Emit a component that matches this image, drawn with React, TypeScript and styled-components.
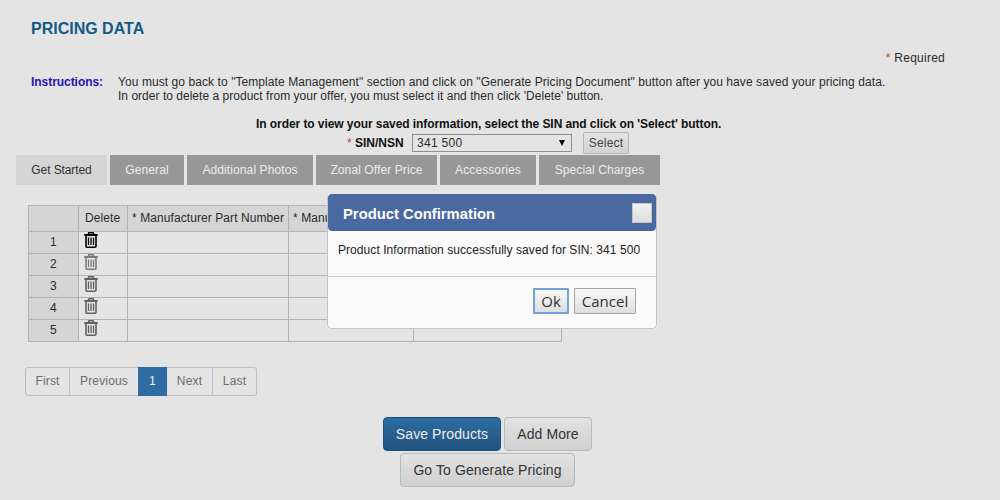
import React from 'react';
import styled, { createGlobalStyle } from 'styled-components';

const GlobalStyle = createGlobalStyle`
  * { box-sizing: border-box; }
  body {
    margin: 0;
    overflow: hidden;
    background: #e4e4e4;
    color: #2b2b2b;
    font: 12px/14px "Liberation Sans", Arial, sans-serif;
  }
  button { font-family: inherit; padding: 0; margin: 0; }
`;

const Page = styled.main`
  width: 1000px;
  height: 500px;
  overflow: hidden;
  background: #e4e4e4;
`;

const Title = styled.h1`
  margin: 0;
  padding: 19px 0 0 31px;
  height: 50px;
  font-size: 16px;
  line-height: 20px;
  font-weight: bold;
  color: #145a84;
`;

const Star = styled.span`
  color: #d03038;
  font-weight: normal;
`;

const Required = styled.div`
  padding-right: 55px;
  height: 25px;
  line-height: 16px;
  text-align: right;
  letter-spacing: 0.25px;
`;

const Instructions = styled.section`
  display: flex;
  padding-left: 31px;
  height: 42px;
`;

const InstructionsLabel = styled.strong`
  width: 87px;
  color: #1e14c0;
  letter-spacing: -0.05px;
`;

const InstructionsText = styled.p`
  margin: 0;
  white-space: nowrap;
`;

const Line = styled.span<{ $spacing?: number }>`
  display: block;
  letter-spacing: ${(p) => p.$spacing ?? 0}px;
`;

const SelectHint = styled.div`
  height: 15px;
  padding-left: 256px;
  font-weight: bold;
  color: #111;
  letter-spacing: -0.07px;
  white-space: nowrap;
`;

const SinRow = styled.div`
  display: flex;
  align-items: center;
  height: 22px;
  padding-left: 347px;
`;

const SinLabel = styled.label`
  width: 65px;
  font-weight: bold;
  color: #111;
  white-space: pre;
`;

const SinSelect = styled.div`
  display: flex;
  align-items: center;
  justify-content: space-between;
  width: 160px;
  height: 18px;
  margin-right: 11px;
  padding: 0 6px 0 4px;
  border: 1px solid #8e8e8e;
  letter-spacing: 0.3px;
`;

const SelectButton = styled.button`
  width: 46px;
  height: 22px;
  border: 1px solid #b4b4b4;
  border-radius: 2px;
  background: linear-gradient(#e4e4e4, #d2d2d2);
  color: #444;
  font-size: 12px;
  letter-spacing: 0.2px;
`;

const Tabs = styled.nav`
  display: flex;
  gap: 3px;
  height: 51px;
  padding: 1px 0 0 16px;
`;

const Tab = styled.button<{ $width: number; $active?: boolean }>`
  width: ${(p) => p.$width}px;
  height: 30px;
  border: 0;
  background: ${(p) => (p.$active ? '#d5d5d5' : '#979797')};
  color: ${(p) => (p.$active ? '#333' : '#ececec')};
  font-size: 12px;
  letter-spacing: ${(p) => (p.$active ? -0.1 : 0.1)}px;
  white-space: nowrap;
`;

const Grid = styled.div`
  display: grid;
  grid-template-columns: 50px 49px 161px 125px 148px;
  grid-template-rows: 26px repeat(5, 22px);
  width: 534px;
  height: 137px;
  margin-left: 28px;
  border-top: 1px solid #b2b2b2;
  border-left: 1px solid #b2b2b2;
`;

const Cell = styled.div<{ $head?: boolean; $center?: boolean; $pad?: number }>`
  display: flex;
  align-items: center;
  justify-content: ${(p) => (p.$center ? 'center' : 'flex-start')};
  padding-left: ${(p) => (p.$center ? 0 : p.$pad ?? 5)}px;
  padding-bottom: ${(p) => (p.$head ? 2 : 0)}px;
  overflow: hidden;
  border-right: 1px solid #b2b2b2;
  border-bottom: 1px solid #b2b2b2;
  background: ${(p) => (p.$head ? '#d5d5d5' : 'transparent')};
  letter-spacing: 0.08px;
  white-space: nowrap;
`;

const TrashIcon = styled.svg`
  display: block;
  flex: none;
  margin-bottom: 5px;
`;

const Pager = styled.nav`
  display: flex;
  width: 232px;
  height: 29px;
  margin: 25px 0 0 25px;
  border: 1px solid #bfbfbf;
  border-radius: 3px;
`;

const PageLink = styled.button<{ $width: number; $active?: boolean; $divided?: boolean }>`
  width: ${(p) => p.$width}px;
  height: ${(p) => (p.$active ? 29 : 27)}px;
  margin-top: ${(p) => (p.$active ? -1 : 0)}px;
  padding-bottom: 2px;
  border: 0;
  border-right: ${(p) => (p.$divided ? '1px solid #bfbfbf' : '0')};
  background: ${(p) => (p.$active ? '#2e6da4' : 'transparent')};
  color: ${(p) => (p.$active ? '#f0f0f0' : '#6d6d6d')};
  font-size: 12px;
  letter-spacing: 0.15px;
`;

const Actions = styled.div`
  display: flex;
  flex-direction: column;
  gap: 2px;
  margin: 21px 0 0 383px;
`;

const ActionRow = styled.div<{ $indent?: number }>`
  display: flex;
  gap: 3px;
  padding-left: ${(p) => p.$indent ?? 0}px;
`;

const ActionButton = styled.button<{ $width: number; $primary?: boolean }>`
  width: ${(p) => p.$width}px;
  height: 34px;
  border: 1px solid ${(p) => (p.$primary ? '#205081' : '#b9b9b9')};
  border-radius: 4px;
  background: ${(p) =>
    p.$primary ? 'linear-gradient(#2d6ca2, #22547f)' : 'linear-gradient(#e2e2e2, #d0d0d0)'};
  color: ${(p) => (p.$primary ? '#eee' : '#333')};
  font-size: 14px;
  letter-spacing: 0.1px;
  white-space: nowrap;
`;

const Dialog = styled.div`
  position: absolute;
  left: 327px;
  top: 194px;
  width: 330px;
  height: 135px;
  border: 1px solid #c4c4c4;
  border-radius: 5px;
  background: #fafafa;
`;

const DialogHeader = styled.header`
  display: flex;
  align-items: center;
  justify-content: space-between;
  height: 37px;
  margin: -1px 0 0;
  padding: 0 3px 0 14px;
  border: 1px solid #4765a0;
  border-radius: 4px;
  background: #4a69a0;
  color: #fff;
  font-size: 14.8px;
  font-weight: bold;
`;

const DialogTitle = styled.span`
  padding-top: 2px;
`;

const CloseButton = styled.button`
  width: 20px;
  height: 20px;
  border: 1px solid #c4c4c4;
  background: linear-gradient(#f2f2f2, #dedede);
`;

const DialogBody = styled.div`
  height: 46px;
  padding: 12px 0 0 10px;
  border-bottom: 1px solid #c8c8c8;
  color: #222;
  letter-spacing: 0.06px;
  white-space: nowrap;
`;

const DialogFooter = styled.footer`
  display: flex;
  justify-content: flex-end;
  gap: 5px;
  padding: 11px 20px 0 0;
`;

const DialogButton = styled.button<{ $width: number; $focused?: boolean }>`
  width: ${(p) => p.$width}px;
  height: 26px;
  border: ${(p) => (p.$focused ? '2px solid #73a0e4' : '1px solid #a3a3a3')};
  border-radius: 1px;
  background: linear-gradient(#f8f8f8, #dedede);
  color: #333;
  font: 15px/20px "Open Sans", sans-serif;
`;

const Trash = ({ color }: { color: string }) => (
  <TrashIcon width="14" height="16" viewBox="0 0 14 16" fill="none" stroke={color}>
    <path d="M4.5 2V1.4Q4.5.8 5.2.8H8.8Q9.5.8 9.5 1.4V2" strokeWidth="1.5" />
    <path d="M.3 3H13.7" strokeWidth="2" />
    <path d="M2 4V14.2Q2 15.2 3 15.2H11Q12 15.2 12 14.2V4" strokeWidth="1.6" />
    <path d="M4.5 5.5V13M7 5.5V13M9.5 5.5V13" strokeWidth="1.3" />
  </TrashIcon>
);

const tabs: [string, number][] = [
  ['Get Started', 91],
  ['General', 74],
  ['Additional Photos', 126],
  ['Zonal Offer Price', 121],
  ['Accessories', 96],
  ['Special Charges', 121],
];

const columns: [string, number][] = [
  ['', 0],
  ['Delete', 6],
  ['* Manufacturer Part Number', 4],
  ['* Manu', 4],
  ['', 0],
];

export default function App() {
  return (
    <Page>
      <GlobalStyle />
      <Title>PRICING DATA</Title>
      <Required><Star>*</Star> Required</Required>
      <Instructions>
        <InstructionsLabel>Instructions:</InstructionsLabel>
        <InstructionsText>
          <Line $spacing={0.075}>You must go back to "Template Management" section and click on "Generate Pricing Document" button after you have saved your pricing data.</Line>
          <Line $spacing={0.022}>In order to delete a product from your offer, you must select it and then click 'Delete' button.</Line>
        </InstructionsText>
      </Instructions>
      <SelectHint>In order to view your saved information, select the SIN and click on 'Select' button.</SelectHint>
      <SinRow>
        <SinLabel><Star>*</Star> SIN/NSN</SinLabel>
        <SinSelect>
          341 500
          <svg width="6" height="6" viewBox="0 0 6 6"><path d="M0 0H6L3 6Z" fill="#000" /></svg>
        </SinSelect>
        <SelectButton>Select</SelectButton>
      </SinRow>
      <Tabs>
        {tabs.map(([label, width], i) => (
          <Tab key={label} $width={width} $active={i === 0}>{label}</Tab>
        ))}
      </Tabs>
      <Grid>
        {columns.map(([label, pad], i) => <Cell key={i} $head $pad={pad}>{label}</Cell>)}
        {[1, 2, 3, 4, 5].map((n) => (
          <React.Fragment key={n}>
            <Cell $head $center>{n}</Cell>
            <Cell><Trash color={n === 1 ? '#000' : n === 2 ? '#7c7c7c' : '#626262'} /></Cell>
            <Cell /><Cell /><Cell />
          </React.Fragment>
        ))}
      </Grid>
      <Pager>
        <PageLink $width={44} $divided>First</PageLink>
        <PageLink $width={68}>Previous</PageLink>
        <PageLink $width={29} $active>1</PageLink>
        <PageLink $width={46} $divided>Next</PageLink>
        <PageLink $width={43}>Last</PageLink>
      </Pager>
      <Actions>
        <ActionRow>
          <ActionButton $width={118} $primary>Save Products</ActionButton>
          <ActionButton $width={88}>Add More</ActionButton>
        </ActionRow>
        <ActionRow $indent={17}>
          <ActionButton $width={175}>Go To Generate Pricing</ActionButton>
        </ActionRow>
      </Actions>
      <Dialog role="dialog">
        <DialogHeader>
          <DialogTitle>Product Confirmation</DialogTitle>
          <CloseButton aria-label="Close" />
        </DialogHeader>
        <DialogBody>Product Information successfully saved for SIN: 341 500</DialogBody>
        <DialogFooter>
          <DialogButton $width={36} $focused>Ok</DialogButton>
          <DialogButton $width={62}>Cancel</DialogButton>
        </DialogFooter>
      </Dialog>
    </Page>
  );
}
